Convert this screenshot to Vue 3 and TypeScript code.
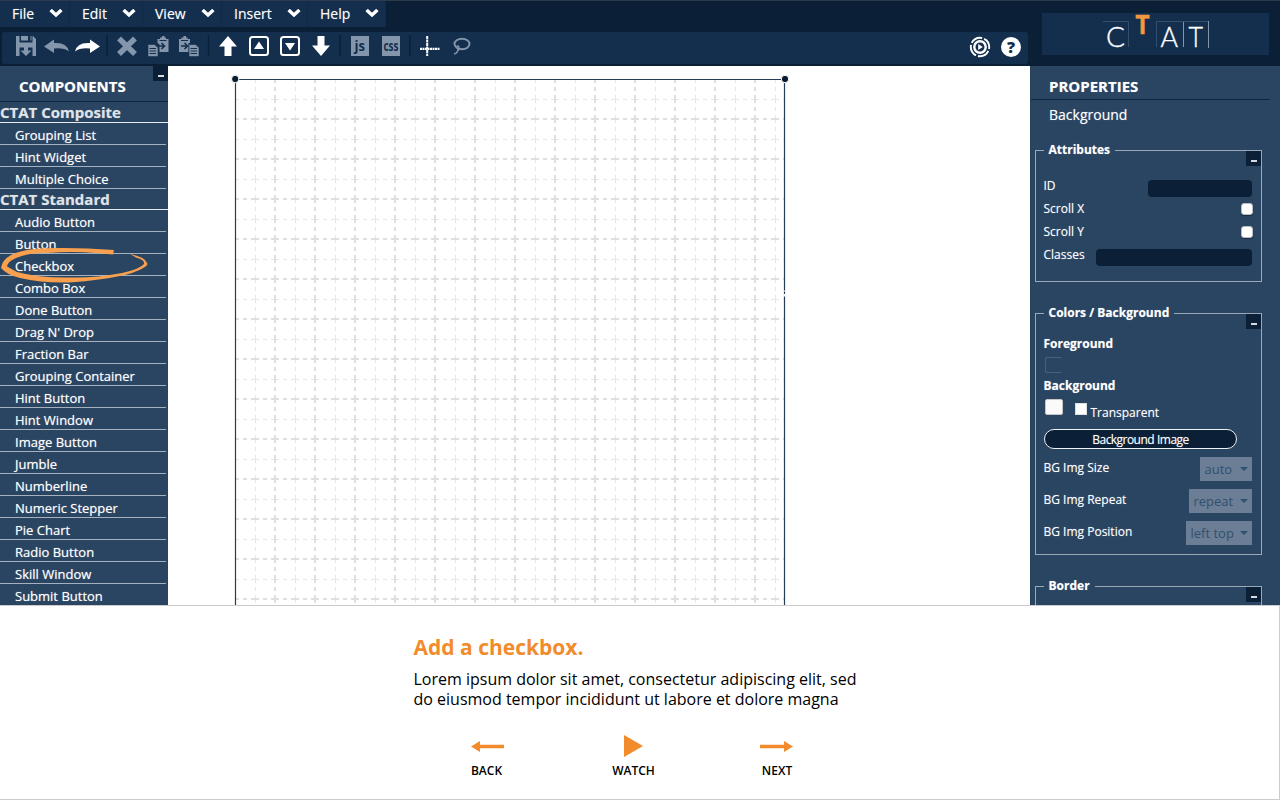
<script setup lang="ts">
interface Group {
  name: string
  items: string[]
}

interface SelectRow {
  label: string
  value: string
  width: number
}

const menus: { label: string; width: number }[] = [
  { label: 'File', width: 70 },
  { label: 'Edit', width: 73 },
  { label: 'View', width: 79 },
  { label: 'Insert', width: 86 },
  { label: 'Help', width: 78 },
]

const groups: Group[] = [
  { name: 'CTAT Composite', items: ['Grouping List', 'Hint Widget', 'Multiple Choice'] },
  {
    name: 'CTAT Standard',
    items: [
      'Audio Button', 'Button', 'Checkbox', 'Combo Box', 'Done Button', "Drag N' Drop",
      'Fraction Bar', 'Grouping Container', 'Hint Button', 'Hint Window', 'Image Button',
      'Jumble', 'Numberline', 'Numeric Stepper', 'Pie Chart', 'Radio Button',
      'Skill Window', 'Submit Button',
    ],
  },
]

const selects: SelectRow[] = [
  { label: 'BG Img Size', value: 'auto', width: 52 },
  { label: 'BG Img Repeat', value: 'repeat', width: 63 },
  { label: 'BG Img Position', value: 'left top', width: 66 },
]
</script>

<template>
  <div class="app">
    <header class="top">
      <div class="bars">
        <nav class="menu">
          <div v-for="m in menus" :key="m.label" class="menu-item" :style="{ width: m.width + 'px' }">
            <span>{{ m.label }}</span>
            <svg width="14" height="10" viewBox="0 0 14 10"><path d="M1.600 1 L7 6 L12.400 1" fill="none" stroke="#fff" stroke-width="3.400" /></svg>
          </div>
        </nav>
        <div class="toolbar">
          <svg class="tools" width="1026" height="32" viewBox="2 32 1026 32">
            <g fill="#8496ab">
              <path d="M16 36 h3.500 v6.500 h13 v-6.500 h.5 l3 3 v17 h-3.500 v-8.500 h-13 v8.500 h-3.500z M21 36 h7 v4.500 h-7z M30.500 36h1v4.500h-1z" />
              <path d="M24 46 h4 v4.500 h3.500 L26 56 L20.500 50.500 H24z" />
              <path d="M44 46.500 L54 39.500 V43 Q67 42 69 51.500 Q64 47.500 54 48.500 V53z" />
            </g>
            <path d="M100 46.500 L90 39.500 V43 Q77 42 75 51.500 Q80 47.500 90 48.500 V53z" fill="#fff" />
            <path d="M119 38.500 L135 54 M135 38.500 L119 54" stroke="#8496ab" stroke-width="5.500" />
            <g fill="#8496ab">
              <path d="M157.500 39 h2.500 v-1.500 h2 v-1.500 h2.500 v1.500 h1.500 v1.500 h2.500 v13 h-9 v-7.500 l-2 -1.500z" />
              <path d="M148 44.500 h6.500 l3.500 3 v9 h-10z" stroke="#142f4e" stroke-width=".6" />
              <path d="M179 39 h2.500 v-1.500 h2 v-1.500 h2.500 v1.500 h1.500 v1.500 h2.500 v4 h-1.500 v9 h-9.500z" />
              <path d="M189 44.500 h6.500 l3.500 3 v9 h-10z" stroke="#142f4e" stroke-width=".6" />
            </g>
            <g fill="none" stroke="#142f4e" stroke-width="1">
              <path d="M159.500 40.500h7 M149.500 48.500h6.500 M149.500 51h6.500 M149.500 53.500h6.500" />
              <path d="M181 40.500h7 M190.500 48.500h6.500 M190.500 51h6.500 M190.500 53.500h6.500" />
              <path d="M158.500 46h5.500 m-2.500 -3 l3 3 l-3 3 M181 46h6 m-2.500 -3 l3 3 l-3 3" stroke-width="1.600" />
            </g>
            <g fill="#fff">
              <path d="M228 36 L237 46.500 H231.500 V56 H224.500 V46.500 H219z" />
              <path d="M321 56 L330 45.500 H324.500 V36 H317.500 V45.500 H312z" />
              <path d="M259 41.500 L264 49 H254z M290 50.500 L295 43 H285z" />
            </g>
            <g fill="none" stroke="#fff" stroke-width="2">
              <rect x="250" y="37" width="18" height="18" rx="2.500" />
              <rect x="281" y="37" width="18" height="18" rx="2.500" />
            </g>
            <g fill="#8496ab"><rect x="351" y="36" width="18" height="20" /><rect x="382" y="36" width="18" height="20" /></g>
            <g class="code">
              <text x="354.500" y="51" textLength="10.500" lengthAdjust="spacingAndGlyphs">js</text>
              <text x="383.500" y="51" textLength="15" lengthAdjust="spacingAndGlyphs">css</text>
            </g>
            <path d="M420 48.800 H440" stroke="#fff" stroke-width="2.200" stroke-dasharray="2 .5" />
            <path d="M427.200 36 V56" stroke="#fff" stroke-width="2" stroke-dasharray="3 .5" />
            <g fill="none" stroke="#8496ab" stroke-width="1.900">
              <ellipse cx="462" cy="44" rx="7.500" ry="5.200" />
              <path d="M456.500 46.500 q2 -1.500 2.500 1 q.5 2 -1.500 3.500 M458 49 q0 4 -4 5" stroke-width="1.500" />
            </g>
            <g stroke="#0a2038" stroke-width="1.500"><path d="M107 35V56 M208.500 35V56 M340 35V56 M410 35V56" /></g>
            <circle cx="980" cy="47" r="9.200" fill="none" stroke="#fff" stroke-width="1.900" stroke-dasharray="12.450 2" stroke-dashoffset="-4" />
            <circle cx="980" cy="47" r="5.700" fill="none" stroke="#fff" stroke-width="2.400" />
            <path d="M978.200 44 L982.800 47 L978.200 50z" fill="#fff" />
            <circle cx="1011" cy="47" r="10" fill="#fff" />
            <text class="question" x="1011" y="52.500" text-anchor="middle">?</text>
          </svg>
        </div>
      </div>
      <div class="brand">
        <svg width="227" height="42" viewBox="1042 13 227 42">
          <g fill="none" stroke="#31506f" stroke-width="1">
            <path d="M1103 21.500 H1128.500 V47 M1156.500 47 V21.500 H1208 M1183.500 21.500 V47" />
          </g>
          <path d="M1183.500 22V47 M1208.500 21V48" stroke="#8596a8" stroke-width="1" />
          <g class="thin">
            <text x="1106" y="47" textLength="19" lengthAdjust="spacingAndGlyphs">C</text>
            <text x="1160.500" y="47" textLength="17.500" lengthAdjust="spacingAndGlyphs">A</text>
            <text x="1188.500" y="47" textLength="14.500" lengthAdjust="spacingAndGlyphs">T</text>
          </g>
          <text class="accent" x="1135.500" y="34" textLength="14" lengthAdjust="spacingAndGlyphs">T</text>
        </svg>
      </div>
    </header>

    <main class="work">
      <aside class="components">
        <span class="collapse"></span>
        <h2>COMPONENTS</h2>
        <section v-for="g in groups" :key="g.name">
          <h3>{{ g.name }}</h3>
          <div v-for="i in g.items" :key="i" class="item">{{ i }}</div>
        </section>
        <svg class="scribble" width="150" height="40" viewBox="0 245 150 40">
          <path d="M114 250 Q82 247.500 54 248 Q25 248 11 255 Q2 260 1 268 Q7 275 20 278 Q47 284 76 282 Q112 279 132 273 Q150 266 147 263 Q145 257 130 254 L136 257.500 Q145 260 144 264 Q140 269 122 273 Q95 278 72 277.500 Q38 278 17 272 L7 266.500 Q7 262 16 258 Q28 252.500 48 253 Q72 251 95 253 L113 254.500z" fill="#f8a04e" />
        </svg>
      </aside>

      <div class="stage">
        <svg width="862" height="539" viewBox="168 66 862 539">
          <defs>
            <pattern id="grid" x="235" y="79" width="40" height="40" patternUnits="userSpaceOnUse">
              <g stroke="#e6e6e6" stroke-width="1">
                <path d="M20.500 0V40 M0 20.500H40" stroke-dasharray="4 4 4 4 4 0" />
              </g>
              <g stroke="#dfdfdf" stroke-width="1">
                <path d="M.5 0V40 M39.500 0V40 M0 .5H40 M0 39.500H40" stroke-dasharray="4 4 4 4 4 0" />
              </g>
            </pattern>
          </defs>
          <rect x="236" y="80" width="548" height="525" fill="url(#grid)" />
          <path d="M235.500 605V79.500H784.500V605" fill="none" stroke="#263d56" stroke-width="1.200" />
          <g fill="#071d33" stroke="#fff"><circle cx="235.200" cy="79" r="3.700" /><circle cx="785" cy="79" r="3.700" /></g>
          <path d="M784.500 290.500V291.500 M784.500 294V296.500" stroke="#fff" stroke-width="2" />
        </svg>
      </div>

      <aside class="properties">
        <h2>PROPERTIES</h2>
        <div class="target">Background</div>

        <fieldset class="attributes">
          <legend>Attributes</legend>
          <span class="collapse"></span>
          <div class="row"><label>ID</label><span class="input short"></span></div>
          <div class="row"><label>Scroll X</label><span class="check"></span></div>
          <div class="row"><label>Scroll Y</label><span class="check"></span></div>
          <div class="row"><label>Classes</label><span class="input long"></span></div>
        </fieldset>

        <fieldset class="colors">
          <legend>Colors / Background</legend>
          <span class="collapse"></span>
          <h4>Foreground</h4>
          <span class="swatch empty"></span>
          <h4>Background</h4>
          <div class="fill">
            <span class="swatch"></span>
            <span class="box"></span>
            <label>Transparent</label>
          </div>
          <div class="pill">Background Image</div>
          <div v-for="s in selects" :key="s.label" class="srow">
            <label>{{ s.label }}</label>
            <span class="select" :style="{ width: s.width + 'px' }">{{ s.value }}<i></i></span>
          </div>
        </fieldset>

        <fieldset class="border">
          <legend>Border</legend>
          <span class="collapse"></span>
        </fieldset>
      </aside>
    </main>

    <footer class="guide">
      <div class="copy">
        <h1>Add a checkbox.</h1>
        <p>Lorem ipsum dolor sit amet, consectetur adipiscing elit, sed<br />do eiusmod tempor incididunt ut labore et dolore magna</p>
      </div>
      <div class="actions">
        <div class="action">
          <svg width="34" height="24" viewBox="0 0 34 24"><path d="M0 12.500 L9 7 V10.700 H33 V14.300 H9 V18z" fill="#f28b2c" /></svg>
          <span class="back">BACK</span>
        </div>
        <div class="action watch">
          <svg width="20" height="24" viewBox="0 0 20 24"><path d="M0 1 L19 12 L0 23z" fill="#f28b2c" /></svg>
          <span>WATCH</span>
        </div>
        <div class="action">
          <svg width="34" height="24" viewBox="0 0 34 24"><path d="M33 12.500 L24 7 V10.700 H0 V14.300 H24 V18z" fill="#f28b2c" /></svg>
          <span>NEXT</span>
        </div>
      </div>
    </footer>
  </div>
</template>

<style>
body { margin: 0; }
</style>

<style scoped>
* { box-sizing: border-box; }
.app { width: 1280px; height: 800px; overflow: hidden; display: flex; flex-direction: column; font-family: "Open Sans", "Noto Sans", sans-serif; color: #fff; background: #fff; }
h1, h2, h3, h4, p { margin: 0; }
svg { display: block; }

.top { height: 66px; flex: none; display: flex; justify-content: space-between; background: #0b2037; border-top: 1px solid #2b3b4c; }
.bars { width: 1028px; }
.menu { display: flex; height: 26px; }
.menu-item { background: #142f4e; display: flex; align-items: center; justify-content: space-between; padding: 0 7px 1px 12px; font-size: 14px; line-height: 24px; border-right: 1px solid #102947; text-shadow: 0 0 1px #fff6; }
.menu-item svg { margin-right: -1px; }
.toolbar { margin: 5px 0 0 2px; height: 32px; background: #142f4e; border-radius: 3px; }
.code { font: bold 15px "Open Sans", sans-serif; fill: #142f4e; }
.question { font: 800 16px "Open Sans", sans-serif; fill: #142f4e; }
.brand { width: 227px; height: 42px; margin: 12px 11px 0 0; background: #142f4e; }
.brand svg { overflow: visible; }
.thin { font: 300 27px Lato, sans-serif; fill: #fff; stroke: #fff; stroke-width: .35; }
.accent { font: 900 26px Lato, sans-serif; fill: #f4983f; stroke: #f4983f; stroke-width: .5; }

.work { height: 539px; flex: none; display: flex; overflow: hidden; }
.components { width: 168px; flex: none; position: relative; background: #2a4562; overflow: hidden; }
.components h2 { height: 36px; padding: 8px 0 0 19px; border-bottom: 1px solid #0e2741; font-size: 15px; line-height: 25px; font-weight: 700; text-shadow: 0 0 1px #fff6; }
.components h3 { height: 21px; border-bottom: 1px solid #e7ebee; font-size: 15px; line-height: 20px; font-weight: 700; color: #dfe3e8; text-shadow: 0 0 1px #fff6; }
.item { width: 166px; height: 22px; padding-left: 15px; border-bottom: 1px solid #a6b1bf; font-size: 13px; line-height: 25px; white-space: nowrap; text-shadow: 0 0 1px #fff8; }
.scribble { position: absolute; left: 0; top: 179px; }
.collapse { position: absolute; right: 0; top: 0; width: 15px; height: 15px; background: #0b2037; display: flex; align-items: flex-end; justify-content: center; padding-bottom: 4px; }
.collapse::after { content: ""; width: 6px; height: 2px; background: #d5dae0; }

.stage { width: 862px; flex: none; background: #fff; }

.properties { width: 250px; background: #2a4562; border-left: 1px solid #263f5b; padding-left: 4px; overflow: hidden; }
.properties h2 { width: 239px; height: 34px; margin-left: -4px; padding: 8px 0 0 18px; border-bottom: 1px solid #0e2741; font-size: 15px; line-height: 25px; font-weight: 700; text-shadow: 0 0 1px #fff6; }
.target { height: 41px; padding: 3px 0 0 14px; font-size: 14px; line-height: 24px; text-shadow: 0 0 1px #fff6; }
fieldset { position: relative; width: 227px; margin: 0; padding: 0 8px; border: 1px solid #9ba8b7; font-size: 12px; text-shadow: 0 0 1px #fff6; }
legend { height: 18px; line-height: 17px; margin-left: -.5px; padding: 0 5px; font-size: 12px; font-weight: 700; }
fieldset .collapse { top: -8px; }
.attributes { height: 141px; }
.row { height: 23px; display: flex; justify-content: space-between; line-height: 22px; }
.row label { margin-left: -.5px; }
.row:nth-of-type(1) { margin-top: 16px; }
.input { height: 17px; border-radius: 4px; background: #0b2037; margin: 5px .6px 0 0; }
.short { width: 104px; }
.long { width: 156px; }
.check { width: 12px; height: 12px; margin-top: 5px; border-radius: 3px; border: 1px solid #b9bdc3; background: #fff; box-shadow: 0 1px 1px #1a2b40; }
.colors { height: 251px; margin-top: 22px; }
.colors h4 { height: 22px; line-height: 24px; margin-left: -.5px; font-size: 12px; font-weight: 700; }
.colors legend + .collapse + h4 { margin-top: 10px; }
.swatch { display: block; width: 18px; height: 16px; margin: 3px 0 0 1px; background: #fafafa; border: 1px solid #c4c4c4; border-radius: 2px; }
.empty { width: 17px; height: 16px; margin: 3px 0 1px 1px; background: none; border: 1px solid #486079; border-right: 0; }
.fill { height: 33px; display: flex; }
.box { width: 12px; height: 12px; margin: 7px 4px 0 11.5px; background: #fff; border: 1px solid #dce0e4; }
.fill label { line-height: 20px; margin-top: 7px; }
.pill { width: 193px; height: 20px; border: 1px solid #eef1f4; border-radius: 10px; background: #0b2037; text-align: center; font-size: 12px; letter-spacing: -.55px; line-height: 20px; word-spacing: .5px; }
.srow { height: 32px; display: flex; justify-content: space-between; line-height: 22px; padding-right: 1.500px; }
.pill + .srow { margin-top: 8px; }
.srow label { margin-left: -.5px; }
.select { height: 24px; background: #6b7e95; color: #31506f; padding: 0 4px 0 5px; font-size: 13px; line-height: 23px; display: flex; align-items: center; justify-content: space-between; text-shadow: none; white-space: nowrap; }
.select i { border: 4px solid transparent; border-top-color: #31506f; border-bottom: 0; }
.border { height: 60px; margin-top: 22px; }

.guide { flex: 1; background: #fff; border: 1px solid #ccc; border-left: 0; color: #000; }
.copy { margin: 28px 0 0 413.5px; }
h1 { font-size: 21px; line-height: 26px; font-weight: 700; color: #f28b2c; white-space: nowrap; }
p { margin-top: 9px; font-size: 16px; line-height: 20px; white-space: nowrap; }
.actions { display: flex; justify-content: space-between; width: 323px; margin: 25px 0 0 471px; }
.action { display: flex; flex-direction: column; align-items: center; font-size: 12px; line-height: 16px; font-weight: 600; }
.action span { margin-top: 5px; }
.action .back { margin-left: -3px; }
.watch { padding-left: 2px; }
</style>
